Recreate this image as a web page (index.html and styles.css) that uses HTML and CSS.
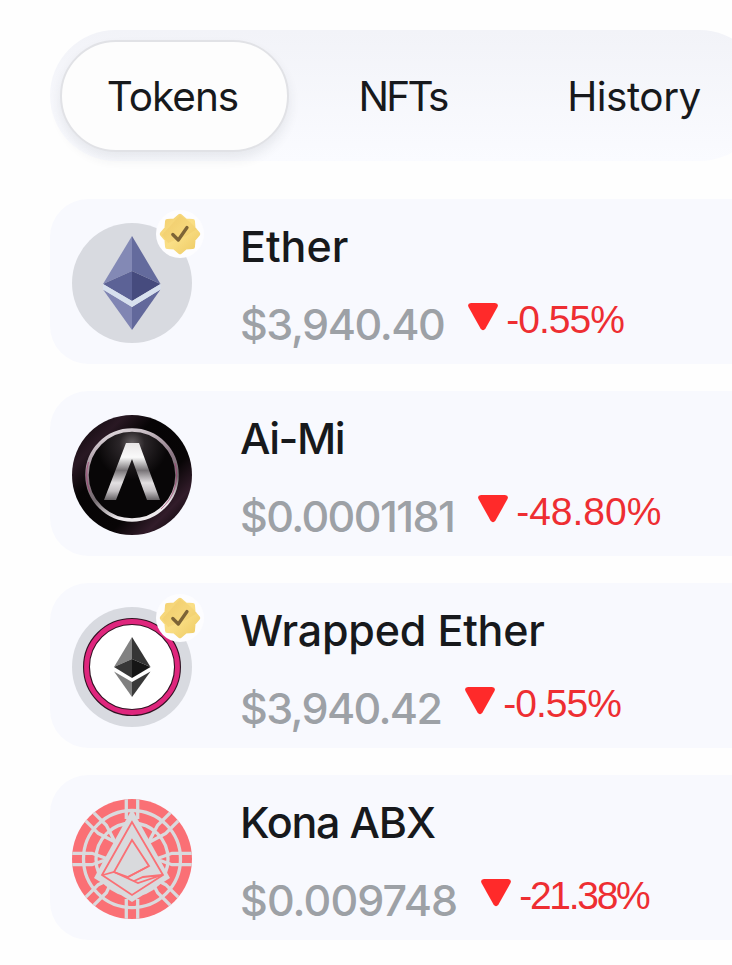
FILE: index.html
```
<!DOCTYPE html>
<html lang="en">
<head>
    <meta charset="UTF-8">
    <title>Wallet</title>
    <link rel="stylesheet" href="styles.css">
</head>
<body>
    <!-- shared shapes -->
    <svg class="defs" width="0" height="0">
        <defs>
            <linearGradient id="gold" x1="0" y1="0" x2="1" y2="1">
                <stop offset="0" stop-color="#f3d071"/>
                <stop offset="0.5" stop-color="#fadf86"/>
                <stop offset="1" stop-color="#eecb64"/>
            </linearGradient>
            <linearGradient id="metal" x1="0" y1="0" x2="0" y2="1">
                <stop offset="0" stop-color="#e8e5e7"/>
                <stop offset="0.25" stop-color="#fafafa"/>
                <stop offset="0.48" stop-color="#777376"/>
                <stop offset="0.7" stop-color="#e3e0e2"/>
                <stop offset="0.84" stop-color="#c4c0c3"/>
                <stop offset="1" stop-color="#656164"/>
            </linearGradient>
            <linearGradient id="ring" x1="0" y1="0" x2="0.3" y2="1">
                <stop offset="0" stop-color="#eeeaed"/>
                <stop offset="0.5" stop-color="#8d7885"/>
                <stop offset="0.75" stop-color="#766d72"/>
                <stop offset="1" stop-color="#eeeaed"/>
            </linearGradient>
            <linearGradient id="dark" x1="0" y1="0" x2="1" y2="1">
                <stop offset="0" stop-color="#050304"/>
                <stop offset="0.22" stop-color="#291823"/>
                <stop offset="0.36" stop-color="#060405"/>
                <stop offset="0.65" stop-color="#080506"/>
                <stop offset="0.8" stop-color="#321c2a"/>
                <stop offset="0.94" stop-color="#050304"/>
            </linearGradient>
            <radialGradient id="glow" cx="0.5" cy="0.15" r="0.4">
                <stop offset="0" stop-color="#696366"/>
                <stop offset="0.35" stop-color="#2a2528"/>
                <stop offset="1" stop-color="#080607"/>
            </radialGradient>
            <clipPath id="round"><circle cx="60" cy="60" r="60"/></clipPath>
            <symbol id="badge" viewBox="0 0 48 48">
                <circle cx="24" cy="24" r="24" fill="#fdfdff"/>
                <path d="M24 6L29.500 10.700L36.700 11.300L37.300 18.500L42 24L37.300 29.500L36.700 36.700L29.500 37.300L24 42L18.500 37.300L11.300 36.700L10.700 29.500L6 24L10.700 18.500L11.300 11.300L18.500 10.700Z" fill="url(#gold)" stroke="url(#gold)" stroke-width="4.500" stroke-linejoin="round"/>
                <path d="M6 25L24 5L34 12L41 19L30 26L12 33Z" fill="#e7b94f" opacity="0.2"/>
                <path d="M16.800 24.500L22.300 30L31 17.500" fill="none" stroke="#7d6436" stroke-width="3.300" stroke-linecap="round" stroke-linejoin="round"/>
            </symbol>
        </defs>
    </svg>

    <div class="wallet">
        <div class="tabs">
            <div class="tab active"><span class="label-tokens">Tokens</span></div>
            <div class="tab"><span class="label-nfts">NFTs</span></div>
            <div class="tab"><span class="label-history">History</span></div>
        </div>

        <div class="token ether">
            <div class="icon">
                <svg width="120" height="120" viewBox="0 0 120 120">
                    <circle cx="60" cy="60" r="60" fill="#d8dae0"/>
                    <path d="M60 13L31 61L60 48Z" fill="#8389b5"/>
                    <path d="M60 13L88.500 61L60 48Z" fill="#646b9d"/>
                    <path d="M31 61L60 48V78Z" fill="#5c6296"/>
                    <path d="M88.500 61L60 48V78Z" fill="#464b7e"/>
                    <path d="M31 66.500L60 84V107Z" fill="#8085b3"/>
                    <path d="M88.500 66.500L60 84V107Z" fill="#62689b"/>
                    <path d="M31 61L60 78L88.500 61V66.500L60 84L31 66.500Z" fill="#d7e0ee"/>
                </svg>
                <svg class="badge" width="48" height="48"><use href="#badge"/></svg>
            </div>
            <div class="info">
                <div class="name">Ether</div>
                <div class="values">
                    <span class="price">$3,940.40</span>
                    <svg class="down" width="30" height="28" viewBox="0 0 30 28"><path d="M3 0H27Q31 0.500 29.500 4L17.500 25.500Q15 29 12.500 25.500L0.500 4Q-1 0.500 3 0Z" fill="#ff2a2a"/></svg>
                    <span class="change">-0.55%</span>
                </div>
            </div>
        </div>

        <div class="token aimi">
            <div class="icon">
                <svg width="120" height="120" viewBox="0 0 120 120">
                    <circle cx="60" cy="60" r="60" fill="url(#dark)"/>
                    <circle cx="60" cy="60" r="45" fill="url(#glow)" stroke="url(#ring)" stroke-width="3.500"/>
                    <path d="M16.500 47A45 45 0 0 0 18 77M103 48A45 45 0 0 1 89 94" fill="none" stroke="#a63b72" stroke-width="1" opacity="0.65"/>
                    <path d="M54 28H67L88 85H75L60 44L44 85H32Z" fill="url(#metal)"/>
                </svg>
            </div>
            <div class="info">
                <div class="name">Ai-Mi</div>
                <div class="values">
                    <span class="price">$0.0001181</span>
                    <svg class="down" width="30" height="28" viewBox="0 0 30 28"><path d="M3 0H27Q31 0.500 29.500 4L17.500 25.500Q15 29 12.500 25.500L0.500 4Q-1 0.500 3 0Z" fill="#ff2a2a"/></svg>
                    <span class="change">-48.80%</span>
                </div>
            </div>
        </div>

        <div class="token weth">
            <div class="icon">
                <svg width="120" height="120" viewBox="0 0 120 120">
                    <circle cx="60" cy="60" r="60" fill="#d8dae0"/>
                    <circle cx="60" cy="60" r="45.500" fill="#fff" stroke="#321323" stroke-width="7"/>
                    <circle cx="60" cy="60" r="45.500" fill="none" stroke="#df267d" stroke-width="4.800"/>
                    <path d="M60 30L42 60L60 52Z" fill="#828282"/>
                    <path d="M60 30L78.500 60L60 52Z" fill="#353535"/>
                    <path d="M42 60L60 52V71Z" fill="#373737"/>
                    <path d="M78.500 60L60 52V71Z" fill="#151515"/>
                    <path d="M42 64.500L60 75V90Z" fill="#808080"/>
                    <path d="M78.500 64.500L60 75V90Z" fill="#393939"/>
                </svg>
                <svg class="badge" width="48" height="48"><use href="#badge"/></svg>
            </div>
            <div class="info">
                <div class="name">Wrapped Ether</div>
                <div class="values">
                    <span class="price">$3,940.42</span>
                    <svg class="down" width="30" height="28" viewBox="0 0 30 28"><path d="M3 0H27Q31 0.500 29.500 4L17.500 25.500Q15 29 12.500 25.500L0.500 4Q-1 0.500 3 0Z" fill="#ff2a2a"/></svg>
                    <span class="change">-0.55%</span>
                </div>
            </div>
        </div>

        <div class="token kona">
            <div class="icon">
                <svg width="120" height="120" viewBox="0 0 120 120">
                    <circle cx="60" cy="60" r="60" fill="#fa7075"/>
                    <g clip-path="url(#round)" fill="none" stroke="#d9dadd" stroke-width="3.300">
                        <circle cx="60" cy="60" r="48.500"/>
                        <circle cx="60" cy="60" r="36"/>
                        <path d="M54.300 0V20M65.700 0V20M54.300 100V120M65.700 100V120M0 54.300H20L36 60M0 65.700H20L36 60M120 54.300H100L84 60M120 65.700H100L84 60"/>
                        <path d="M54.300 0V18L60 37M65.700 0V18L60 37M54.300 120V102L60 86M65.700 120V102L60 86M0 54.300H18L36 60M0 65.700H18L36 60M120 54.300H102L84 60M120 65.700H102L84 60" transform="rotate(45 60 60)"/>
                    </g>
                    <path d="M60 10L98 79L60 103L22 79Z" fill="#d9dadd"/>
                    <g fill="none" stroke="#fa7075" stroke-width="1.800">
                        <path d="M60 23L30 76L60 96L91 76Z"/>
                        <path d="M60 41L42 73L56 78L77 67Z"/>
                        <path d="M31 76L42 73L66 84L90 76M56 78L77 67M62 82L71 78L90 76"/>
                    </g>
                    <path d="M57 104H59V106H61V104H63V107H57Z" fill="#fa7075"/>
                </svg>
            </div>
            <div class="info">
                <div class="name">Kona ABX</div>
                <div class="values">
                    <span class="price">$0.009748</span>
                    <svg class="down" width="30" height="28" viewBox="0 0 30 28"><path d="M3 0H27Q31 0.500 29.500 4L17.500 25.500Q15 29 12.500 25.500L0.500 4Q-1 0.500 3 0Z" fill="#ff2a2a"/></svg>
                    <span class="change">-21.38%</span>
                </div>
            </div>
        </div>
    </div>
</body>
</html>
```

FILE: styles.css
```
body {
    margin: 0;
    background-color: #fefefe;
    font-family: Inter, "Liberation Sans", sans-serif;
    color: #17191c;
}
.defs {
    display: block;
}
.wallet {
    box-sizing: border-box;
    height: 965px;
    padding: 30px 0 0 50px;
    overflow: hidden;
}
.tabs {
    display: flex;
    box-sizing: border-box;
    width: 715px;
    height: 131px;
    padding: 10px;
    margin-bottom: 38px;
    border-radius: 66px;
    background: linear-gradient(#f2f3f8, #fafbff);
}
.tab {
    box-sizing: border-box;
    width: 230px;
    height: 112px;
    flex-shrink: 0;
    display: flex;
    justify-content: center;
    font-size: 40.5px;
    line-height: 114px;
    white-space: nowrap;
}
.active {
    width: 229px;
    border: 2px solid #e1e2e6;
    border-radius: 56px;
    background-color: #fdfdfd;
    box-shadow: 0 7px 12px rgba(40, 50, 70, 0.09);
    line-height: 110px;
}
.label-tokens {
    letter-spacing: -1px;
    padding-right: 4px;
}
.label-nfts {
    letter-spacing: -2.7px;
    padding-right: 3px;
}
.label-history {
    letter-spacing: -0.5px;
}
.token {
    display: flex;
    box-sizing: border-box;
    height: 165px;
    margin-bottom: 27px;
    padding: 24px 0 0 22px;
    border-radius: 38px 0 0 38px;
    background-color: #f8f9fe;
}
.icon {
    position: relative;
    width: 120px;
    height: 120px;
    margin-right: 48px;
}
.icon svg {
    display: block;
}
.icon .badge {
    position: absolute;
    left: 84px;
    top: -13px;
}
.name {
    font-size: 43px;
    font-weight: 500;
    line-height: 46px;
    white-space: nowrap;
}
.values {
    display: flex;
    margin-top: 30px;
    white-space: nowrap;
}
.price {
    color: #9da1a6;
    font-size: 43px;
    font-weight: 500;
    line-height: 50px;
    letter-spacing: -1.45px;
}
.down {
    margin: 4px 8px 0 24px;
}
.change {
    color: #ee2e32;
    font-family: "Liberation Sans", Arial, sans-serif;
    font-size: 39px;
    line-height: 42px;
    letter-spacing: -1px;
}
/* spacing per token */
.aimi .name {
    letter-spacing: -1.5px;
}
.weth .name {
    letter-spacing: -0.2px;
}
.kona .name {
    letter-spacing: -1.2px;
}
.aimi .price {
    letter-spacing: -1.6px;
}
.weth .price {
    letter-spacing: -1.65px;
}
.kona .price {
    letter-spacing: -0.9px;
}
.aimi .change {
    letter-spacing: 0;
}
.kona .change {
    letter-spacing: -2.3px;
}
```
